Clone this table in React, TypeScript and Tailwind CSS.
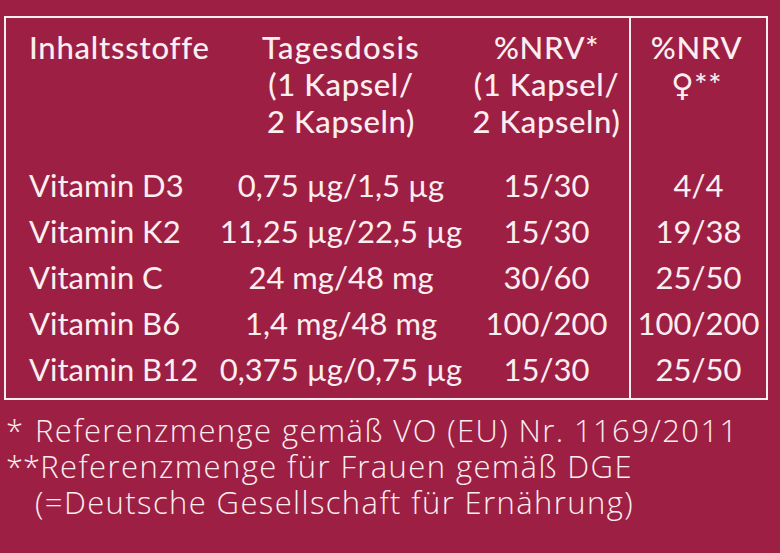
import React from "react";

const rows = [
  ["Vitamin D3", "0,75 µg/1,5 µg", "15/30", "4/4"],
  ["Vitamin K2", "11,25 µg/22,5 µg", "15/30", "19/38"],
  ["Vitamin C", "24 mg/48 mg", "30/60", "25/50"],
  ["Vitamin B6", "1,4 mg/48 mg", "100/200", "100/200"],
  ["Vitamin B12", "0,375 µg/0,75 µg", "15/30", "25/50"],
];

export default function App() {
  return (
    <div
      className="w-[780px] h-[553px] bg-[#9d2044] text-[#fbeef0] overflow-hidden"
      style={{ fontFamily: "Lato, 'Noto Sans', 'DejaVu Sans', sans-serif" }}
    >
      <div className="pt-[16px] pl-[4px]">
        <div className="w-[764px] border-2 border-[#fbeef0] flex">
          <div className="w-[212px] flex flex-col pl-[23px]">
            <div className="h-[144px] pt-[11px] text-[31px] font-medium leading-[37px] tracking-[0.025em] whitespace-nowrap">Inhaltsstoffe</div>
            {rows.map((r) => (
              <div key={r[0]} className="h-[46px] flex items-center text-[31px] whitespace-nowrap">{r[0]}</div>
            ))}
          </div>
          <div className="w-[246px] flex flex-col items-center">
            <div className="h-[144px] pt-[11px] text-[31px] font-medium leading-[37px] text-center whitespace-nowrap tracking-[0.02em]">
              <div className="tracking-[0.04em]">Tagesdosis</div>
              <div>(1 Kapsel/</div>
              <div>2 Kapseln)</div>
            </div>
            {rows.map((r) => (
              <div key={r[0]} className="h-[46px] flex items-center text-[31px] whitespace-nowrap">{r[1]}</div>
            ))}
          </div>
          <div className="w-[165px] flex flex-col items-center">
            <div className="h-[144px] pt-[11px] text-[31px] font-medium leading-[37px] text-center whitespace-nowrap tracking-[0.02em]">
              <div>%NRV*</div>
              <div>(1 Kapsel/</div>
              <div>2 Kapseln)</div>
            </div>
            {rows.map((r) => (
              <div key={r[0]} className="h-[46px] flex items-center text-[31px] whitespace-nowrap">{r[2]}</div>
            ))}
          </div>
          <div className="flex-1 border-l-2 border-[#fbeef0] flex flex-col items-center pb-[6px]">
            <div className="h-[144px] pt-[11px] pr-[4px] text-[31px] font-medium leading-[37px] text-center whitespace-nowrap tracking-[0.02em]">
              <div>%NRV</div>
              <div>
                <span style={{ fontFamily: "'DejaVu Sans', sans-serif" }}>♀</span>**
              </div>
            </div>
            {rows.map((r) => (
              <div key={r[0]} className="h-[46px] flex items-center text-[31px] whitespace-nowrap">{r[3]}</div>
            ))}
          </div>
        </div>
      </div>
      <div
        className="pt-[12px] pl-[6px] text-[31px] font-light leading-[36px] whitespace-nowrap tracking-[0.045em]"
        style={{ fontFamily: "'Open Sans', sans-serif" }}
      >
        <div className="flex"><span className="w-[29px]">*</span><span>Referenzmenge gemäß VO (EU) Nr. 1169/2011</span></div>
        <div className="flex"><span className="tracking-normal">**</span><span>Referenzmenge für Frauen gemäß DGE</span></div>
        <div className="pl-[29px]">(=Deutsche Gesellschaft für Ernährung)</div>
      </div>
    </div>
  );
}
